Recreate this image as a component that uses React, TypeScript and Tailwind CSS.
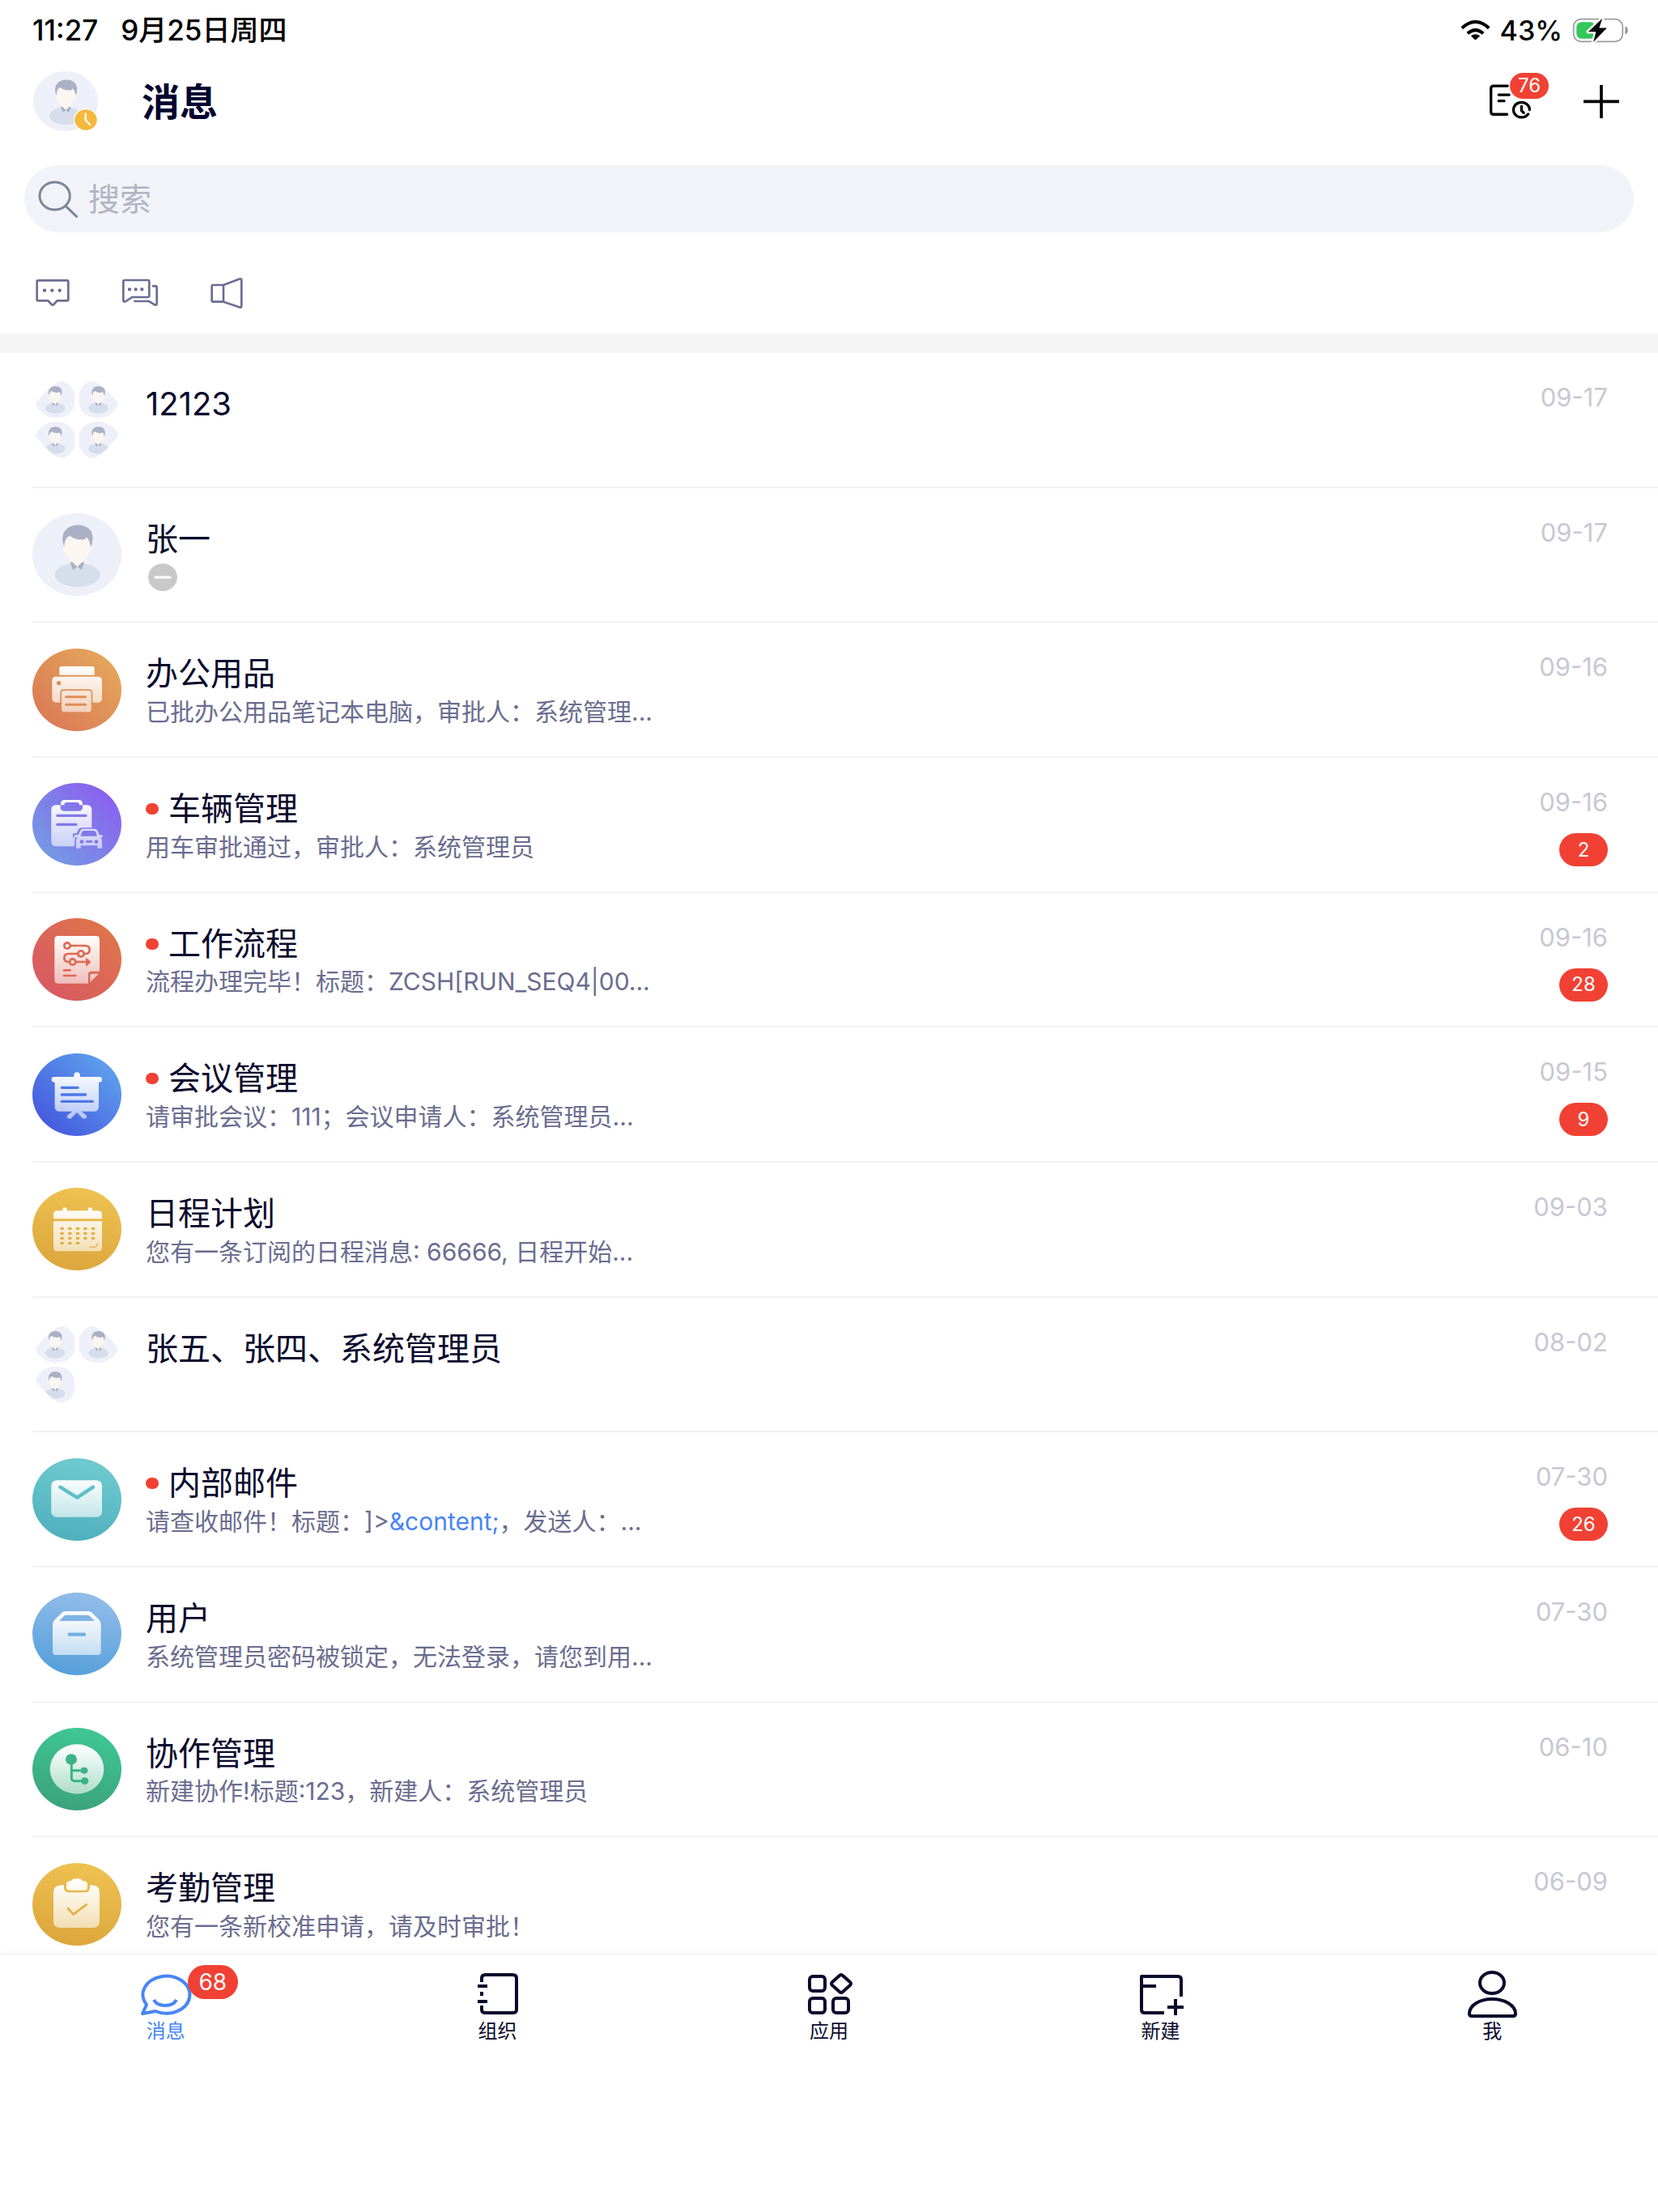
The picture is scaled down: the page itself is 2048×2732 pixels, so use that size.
import { useId } from 'react'
import type { ReactNode } from 'react'

type Message = {
  id: number
  title: string
  preview?: ReactNode
  date: string
  unread?: number
  avatar: ReactNode
}

function Person() {
  return (
    <>
      <ellipse cx="167" cy="228" rx="84" ry="45" fill="#d6deec" />
      <path
        d="M122 88C122 70 213 70 213 88V122C222 124 221 140 211 143C206 160 190 172 184 182L167 200L148 182C142 172 126 160 122 143C112 140 111 124 122 122Z"
        fill="#fcf6f2"
      />
      <path
        d="M118 124C108 100 110 72 124 62C140 38 196 36 214 62C226 74 226 104 217 124C213 116 213 96 199 88C198 94 196 96 192 97C172 99 152 94 140 84C124 86 119 104 118 124Z"
        fill="#abb0c4"
      />
      <path d="M147 180L167 198L151 210L140 183ZM185 180L167 198L182 210L192 184Z" fill="#abb0c4" />
    </>
  )
}

function PersonAvatar({ className }: { className: string }) {
  return (
    <svg viewBox="0 0 330 306" className={className} aria-hidden="true">
      <ellipse cx="165" cy="153" rx="165" ry="153" fill="#edf0f8" />
      <Person />
    </svg>
  )
}

const petals = [
  { x: 12, y: 11, flip: '' },
  { x: 172, y: 11, flip: 'translate(146 0) scale(-1 1)' },
  { x: 12, y: 161, flip: 'translate(0 136) scale(1 -1)' },
  { x: 172, y: 161, flip: 'translate(146 136) scale(-1 -1)' },
]

function GroupAvatar({ count }: { count: number }) {
  const id = useId()
  return (
    <svg viewBox="0 0 330 306" className="h-[102px] w-[110px]" aria-hidden="true">
      {petals.slice(0, count).map((petal, i) => (
        <g key={i} transform={`translate(${petal.x} ${petal.y})`}>
          <clipPath id={`${id}-${i}`}>
            <path
              d="M0 88Q10 64 50 28Q82 0 97 0Q146 12 146 66Q146 136 72 136Q22 132 0 88Z"
              transform={petal.flip || undefined}
            />
          </clipPath>
          <g clipPath={`url(#${id}-${i})`}>
            <rect width="146" height="136" fill="#edf0f8" />
            <g transform="translate(-1 0) scale(0.44)">
              <Person />
            </g>
          </g>
        </g>
      ))}
    </svg>
  )
}

type AppAvatarProps = {
  from: string
  to: string
  diagonal?: boolean
  children: (glyph: string) => ReactNode
}

// Round app icon: coloured gradient disc with a white glyph that fades towards the bottom
function AppAvatar({ from, to, diagonal, children }: AppAvatarProps) {
  const id = useId()
  return (
    <svg viewBox="0 0 330 306" className="h-[102px] w-[110px]" aria-hidden="true">
      <defs>
        <linearGradient id={`${id}-bg`} x1={diagonal ? '0.85' : '0.6'} y1={diagonal ? '0.15' : '0'} x2={diagonal ? '0.15' : '0.4'} y2={diagonal ? '0.85' : '1'}>
          <stop offset="0" stopColor={from} />
          <stop offset="1" stopColor={to} />
        </linearGradient>
        <linearGradient id={`${id}-fg`} gradientUnits="userSpaceOnUse" x1="0" y1="60" x2="0" y2="245">
          <stop offset="0" stopColor="#fff" />
          <stop offset="1" stopColor="#fff" stopOpacity="0.58" />
        </linearGradient>
      </defs>
      <ellipse cx="165" cy="153" rx="165" ry="153" fill={`url(#${id}-bg)`} />
      {children(`url(#${id}-fg)`)}
    </svg>
  )
}

const printerIcon = (
  <AppAvatar from="#e4a45a" to="#db7c56" diagonal>
    {(fg) => (
      <>
        <path d="M107 66H223Q230 66 230 73V98H100V73Q100 66 107 66Z" fill={fg} />
        <path
          d="M89 104H242Q258 104 258 120V184Q258 200 242 200H223V164Q223 151 210 151H116Q103 151 103 164V200H89Q73 200 73 184V120Q73 104 89 104ZM98 120A8 8 0 1 0 98 136A8 8 0 1 0 98 120Z"
          fill={fg}
        />
        <rect x="108" y="156" width="110" height="79" rx="9" fill={fg} />
        <path d="M125 179H197M125 208H197" stroke="#de8f57" strokeWidth="9" strokeLinecap="round" />
      </>
    )}
  </AppAvatar>
)

const vehicleIcon = (
  <AppAvatar from="#8a62ef" to="#7598e4" diagonal>
    {(fg) => (
      <>
        <path
          d="M88 82H104V90Q104 104 118 104H172Q186 104 186 90V82H202Q220 82 220 100V166H184Q172 166 168 178L164 187H150V202H158L155 235H88Q70 235 70 217V100Q70 82 88 82Z"
          fill={fg}
        />
        <path d="M105 82V78Q105 63 120 63H171Q186 63 186 78V82H174Q174 72 164 72H128Q118 72 118 82Z" fill={fg} />
        <path d="M93 121H198M92 154H162" stroke="#8079e8" strokeWidth="10" strokeLinecap="round" />
        <path
          d="M188 170H229Q240 170 244 182L248 193H260V202H252Q258 206 258 214V242H241V232H179V242H162V214Q162 206 168 202H155V193H170L175 182Q179 170 188 170Z"
          fill={fg}
        />
        <path d="M192 177H226Q234 177 236 184L240 197H179L183 184Q185 177 192 177Z" fill="#8079e8" />
        <circle cx="183" cy="218" r="7" fill="#8079e8" />
        <circle cx="237" cy="218" r="7" fill="#8079e8" />
        <path d="M202 217H219" stroke="#8079e8" strokeWidth="8" strokeLinecap="round" />
      </>
    )}
  </AppAvatar>
)

const flowIcon = (
  <AppAvatar from="#df744c" to="#d85a62" diagonal>
    {(fg) => (
      <>
        <path d="M95 66H236Q249 66 249 79V197H218Q207 197 207 208V242H95Q82 242 82 229V79Q82 66 95 66Z" fill={fg} />
        <path d="M220 206H246L214 237V212Q214 206 220 206Z" fill={fg} />
        <g fill="none" stroke="#dc6a52" strokeWidth="8" strokeLinecap="round">
          <circle cx="129" cy="102" r="11" />
          <path d="M141 102H196Q212 102 212 117T196 132H192M169 132H134Q118 132 118 147T134 162H138M161 162H200" />
          <circle cx="180" cy="132" r="11" />
          <circle cx="149" cy="162" r="11" />
          <path d="M117 193H140M117 213H160" />
        </g>
        <path d="M198 147Q206 150 217 162Q206 175 198 179Z" fill="#dc6a52" />
      </>
    )}
  </AppAvatar>
)

const meetingIcon = (
  <AppAvatar from="#5d9ded" to="#465cdf" diagonal>
    {(fg) => (
      <>
        <path
          d="M154 87V81Q154 70 165 70T177 81V87H249Q258 87 258 97T249 107H246V197Q246 215 228 215H182L202 232Q202 244 188 242L165 219L142 242Q128 244 128 232L148 215H101Q83 215 83 197V107H80Q71 107 71 97T80 87Z"
          fill={fg}
        />
        <path d="M109 127H168M109 153H197M109 178H223" stroke="#4f78e6" strokeWidth="10" strokeLinecap="round" />
      </>
    )}
  </AppAvatar>
)

const calendarDots = [
  [110, 139, 168, 196, 225],
  [110, 139, 168, 196, 225],
  [110, 139, 168, 196, 225],
  [110, 139, 168],
]

const calendarIcon = (
  <AppAvatar from="#eec251" to="#dca63c">
    {(fg) => (
      <>
        <path
          d="M92 85H112V80Q112 73 120 73T128 80V85H206V80Q206 73 214 73T222 80V85H244Q258 85 258 99V115H78V99Q78 85 92 85Z"
          fill={fg}
        />
        <path d="M78 124H258V221Q258 235 244 235H92Q78 235 78 221Z" fill={fg} />
        {calendarDots.map((row, r) =>
          row.map((x) => <rect key={`${r}-${x}`} x={x - 7} y={146 + r * 18} width="14" height="10" rx="5" fill="#e0ae42" />),
        )}
        <path d="M211 220H226Q241 220 242 204" fill="none" stroke="#e6bb66" strokeWidth="5" />
      </>
    )}
  </AppAvatar>
)

const mailIcon = (
  <AppAvatar from="#6fcbcf" to="#4fafbd">
    {(fg) => (
      <>
        <rect x="70" y="82" width="188" height="136" rx="20" fill={fg} />
        <path d="M103 107L166 146L225 107" fill="none" stroke="#5ebfc8" strokeWidth="13" strokeLinecap="round" />
      </>
    )}
  </AppAvatar>
)

const boxIcon = (
  <AppAvatar from="#92bde9" to="#559fdb">
    {(fg) => (
      <>
        <path
          d="M75 118Q75 107 84 99L108 76Q114 69 122 69H208Q216 69 222 76L246 99Q254 107 254 118V219Q254 231 242 231H87Q75 231 75 219ZM100 105H230L213 87Q209 83 203 83H127Q121 83 117 87Z"
          fill={fg}
          fillRule="evenodd"
        />
        <path d="M137 155H192" stroke="#73aee3" strokeWidth="13" strokeLinecap="round" />
      </>
    )}
  </AppAvatar>
)

const collabIcon = (
  <AppAvatar from="#3fc795" to="#3ca27c">
    {(fg) => (
      <>
        <ellipse cx="165" cy="153" rx="100" ry="92" fill={fg} />
        <ellipse cx="144" cy="117" rx="21" ry="20" fill="#3eb289" />
        <ellipse cx="192" cy="158" rx="14" ry="12" fill="#3eb289" />
        <ellipse cx="194" cy="197" rx="14" ry="13" fill="#3eb289" />
        <path d="M145 120V186Q145 197 156 197H190M145 158H190" fill="none" stroke="#3eb289" strokeWidth="9" />
      </>
    )}
  </AppAvatar>
)

const attendanceIcon = (
  <AppAvatar from="#eec251" to="#dca63c">
    {(fg) => (
      <>
        <path
          d="M108 82H117V90Q117 109 136 109H194Q213 109 213 90V82H222Q249 84 249 108V216Q249 240 222 240H106Q78 240 78 216V108Q78 84 108 82Z"
          fill={fg}
        />
        <path
          d="M144 66Q148 58 158 58H172Q182 58 186 66Q204 66 204 78V92Q204 101 192 101H138Q126 101 126 92V78Q126 66 144 66Z"
          fill={fg}
        />
        <path d="M132 168L152 190L200 154" fill="none" stroke="#e3b047" strokeWidth="8" strokeLinecap="round" />
      </>
    )}
  </AppAvatar>
)

const messages: Message[] = [
  { id: 1, title: '12123', date: '09-17', avatar: <GroupAvatar count={4} /> },
  {
    id: 2,
    title: '张一',
    date: '09-17',
    avatar: <PersonAvatar className="h-[102px] w-[110px]" />,
    preview: (
      <svg viewBox="0 0 42 34" className="h-[34px] w-[42px]" role="img" aria-label="离线">
        <ellipse cx="21" cy="17" rx="18" ry="17" fill="#c9c9c9" />
        <path d="M12 17H30" stroke="#fff" strokeWidth="3" strokeLinecap="round" />
      </svg>
    ),
  },
  { id: 3, title: '办公用品', date: '09-16', avatar: printerIcon, preview: '已批办公用品笔记本电脑，审批人：系统管理...' },
  { id: 4, title: '车辆管理', date: '09-16', unread: 2, avatar: vehicleIcon, preview: '用车审批通过，审批人：系统管理员' },
  { id: 5, title: '工作流程', date: '09-16', unread: 28, avatar: flowIcon, preview: '流程办理完毕！标题：ZCSH[RUN_SEQ4|00...' },
  { id: 6, title: '会议管理', date: '09-15', unread: 9, avatar: meetingIcon, preview: '请审批会议：111；会议申请人：系统管理员...' },
  { id: 7, title: '日程计划', date: '09-03', avatar: calendarIcon, preview: '您有一条订阅的日程消息: 66666, 日程开始...' },
  { id: 8, title: '张五、张四、系统管理员', date: '08-02', avatar: <GroupAvatar count={3} /> },
  {
    id: 9,
    title: '内部邮件',
    date: '07-30',
    unread: 26,
    avatar: mailIcon,
    preview: (
      <>
        请查收邮件！标题：]&gt;<span className="text-[#4785f7]">&amp;content;</span>，发送人：...
      </>
    ),
  },
  { id: 10, title: '用户', date: '07-30', avatar: boxIcon, preview: '系统管理员密码被锁定，无法登录，请您到用...' },
  { id: 11, title: '协作管理', date: '06-10', avatar: collabIcon, preview: '新建协作!标题:123，新建人：系统管理员' },
  { id: 12, title: '考勤管理', date: '06-09', avatar: attendanceIcon, preview: '您有一条新校准申请，请及时审批！' },
]

function StatusBar() {
  return (
    <div className="flex h-[74px] shrink-0 items-center justify-between pr-9 pl-10 font-medium text-black">
      <div className="flex gap-7 text-[35px]">
        <span>11:27</span>
        <span>9月25日周四</span>
      </div>
      <div className="flex items-center gap-3 text-[34px]">
        <svg viewBox="0 0 110 72" className="h-6 w-[37px]" aria-hidden="true">
          <path d="M5 29Q55 -17 105 29M26 49Q55 24 84 49" fill="none" stroke="#000" strokeWidth="12" />
          <path d="M38 58Q55 45 72 58L58 71Q55 73 52 71Z" />
        </svg>
        <span>43%</span>
        <svg viewBox="0 0 210 94" className="h-[31px] w-[70px]" aria-hidden="true">
          <rect x="4" y="5" width="184" height="84" rx="28" fill="none" stroke="#9b9b9b" strokeWidth="5" />
          <path d="M197 31Q208 36 208 47T197 62Z" fill="#9b9b9b" />
          <rect x="15" y="16" width="70" height="62" rx="19" fill="#34c759" />
          <path d="M112 2L59 52H88L78 91L129 38H100Z" stroke="#fff" strokeWidth="14" strokeLinejoin="round" />
          <path d="M112 2L59 52H88L78 91L129 38H100Z" />
        </svg>
      </div>
    </div>
  )
}

function Header() {
  return (
    <header className="flex h-[102px] shrink-0 items-center justify-between pr-12 pl-[41px]">
      <div className="flex items-center gap-[54px]">
        <button type="button" aria-label="个人资料" className="relative">
          <PersonAvatar className="h-[74px] w-20" />
          <svg viewBox="0 0 90 84" className="absolute right-0 bottom-0 h-7 w-[30px]" aria-hidden="true">
            <ellipse cx="45" cy="42" rx="43" ry="40" fill="#f4b83d" stroke="#fff" strokeWidth="4" />
            <path d="M44 20V43L61 60" fill="none" stroke="#fff" strokeWidth="7" strokeLinecap="round" />
          </svg>
        </button>
        <h1 className="pt-0.5 text-[47px] leading-[56px] font-bold text-[#04042f]">消息</h1>
      </div>
      <div className="flex items-center gap-16">
        <button type="button" aria-label="待办" className="relative">
          <svg viewBox="0 0 160 138" className="h-[46px] w-[53px]" fill="none" stroke="#000" strokeWidth="10" strokeLinecap="round" aria-hidden="true">
            <path d="M70 12H18Q8 12 8 22V108Q8 118 18 118H68M37 45H76M37 68H57" />
            <path d="M146 118A30 28 0 1 1 152 101M147 117L141 123M122 88V104L130 112" />
          </svg>
          <span className="absolute -top-3 left-[26px] flex h-8 w-12 items-center justify-center rounded-full bg-[#f14134] text-2xl text-white">
            76
          </span>
        </button>
        <button type="button" aria-label="添加">
          <svg viewBox="0 0 132 123" className="h-[41px] w-11" stroke="#000" strokeWidth="11" aria-hidden="true">
            <path d="M0 61H132M66 0V123" />
          </svg>
        </button>
      </div>
    </header>
  )
}

function SearchBox() {
  return (
    <label className="mx-[30px] mt-7 flex h-[83px] shrink-0 items-center gap-3 rounded-full bg-[#f2f3f9] pl-[17px]">
      <svg viewBox="0 0 150 138" className="h-[46px] w-[50px]" fill="none" stroke="#7f8699" strokeWidth="9" strokeLinecap="round" aria-hidden="true">
        <ellipse cx="62" cy="57" rx="56" ry="51" />
        <path d="M105 97L143 133" />
      </svg>
      <input type="search" aria-label="搜索" placeholder="搜索" className="h-full flex-1 bg-transparent text-[39px] outline-none placeholder:text-[#b1b4c1]" />
    </label>
  )
}

function Filters() {
  return (
    <div className="flex h-[125px] shrink-0 items-center pt-6 pl-11 text-[#6b6d93]">
      <button type="button" aria-label="单聊" className="mr-16">
        <svg viewBox="0 0 126 105" className="h-[35px] w-[42px]" fill="none" stroke="currentColor" strokeWidth="8" aria-hidden="true">
          <path d="M9 7H117Q121 7 121 11V78Q121 82 117 82H80L67 96Q63 100 59 96L46 82H9Q5 82 5 78V11Q5 7 9 7Z" />
          <path d="M33 44H33.1M61 44H61.1M89 44H89.1" strokeWidth="13" strokeLinecap="round" />
        </svg>
      </button>
      <button type="button" aria-label="群聊" className="mr-16">
        <svg viewBox="0 0 138 105" className="h-[35px] w-[46px]" fill="none" stroke="currentColor" strokeWidth="8" aria-hidden="true">
          <path d="M7 80V11Q7 6 12 6H98Q103 6 103 11V64Q103 69 98 69H40L15 85Q7 88 7 80Z" />
          <path d="M117 28H127Q131 28 131 32V93Q130 101 123 97L102 84H49" strokeLinecap="round" />
          <path d="M30 40H30.1M53 40H53.1M76 40H76.1" strokeWidth="13" strokeLinecap="round" />
        </svg>
      </button>
      <button type="button" aria-label="公告">
        <svg viewBox="0 0 120 120" className="size-10" fill="none" stroke="currentColor" strokeWidth="8" aria-hidden="true">
          <path d="M48 30L106 8Q115 5 115 12V108Q115 115 106 112L48 92M9 30H48V92H9Q5 92 5 88V34Q5 30 9 30Z" />
        </svg>
      </button>
    </div>
  )
}

function MessageRow({ message }: { message: Message }) {
  const { title, preview, date, unread, avatar } = message
  return (
    <li className="ml-10 flex items-center border-b-2 border-[#f2f2f3]">
      <div className="shrink-0">{avatar}</div>
      <div className="ml-[30px] flex min-w-0 flex-1 flex-col self-start pt-10">
        <h2 className="flex h-[46px] items-center gap-3 text-[40px] text-[#0a0a2c]">
          {unread && <span className="h-3.5 w-4 rounded-full bg-[#f14134]" />}
          {title}
        </h2>
        <div className="flex h-12 items-center text-[30px] whitespace-pre text-[#6b6d8f] [text-spacing-trim:space-all]">
          <p>{preview}</p>
        </div>
      </div>
      <div className="flex shrink-0 flex-col items-end self-start pt-10 pr-[62px]">
        <time className="h-[53px] text-[31px] leading-[30px] text-[#c8c8d3]">{date}</time>
        {unread && (
          <span className="flex h-[41px] w-[60px] items-center justify-center rounded-full bg-[#f14134] text-2xl text-white">
            {unread}
          </span>
        )}
      </div>
    </li>
  )
}

const tabs = [
  {
    label: '消息',
    badge: 68,
    icon: (
      <>
        <path d="M7 54L12 43A29 23 0 1 1 23 51Z" />
        <path d="M21 37Q25 44 35 44T49 37" />
      </>
    ),
  },
  {
    label: '组织',
    icon: <path d="M17 15V10Q17 6 22 6H55Q60 6 60 10V49Q60 53 55 53H22Q17 53 17 49V44M12 20H24M17 27V32M12 39H24" />,
  },
  {
    label: '应用',
    icon: (
      <>
        <rect x="12" y="8" width="19" height="18" rx="4" />
        <rect x="12" y="35" width="19" height="18" rx="4" />
        <rect x="41" y="35" width="19" height="18" rx="4" />
        <path d="M49 7Q51 5 53 7L62 15Q64 17 62 19L53 27Q51 29 49 27L40 19Q38 17 40 15Z" />
      </>
    ),
  },
  {
    label: '新建',
    icon: <path d="M61 33V12Q61 8 57 8H12V49Q12 53 16 53H40M12 20H30M54 36V56M44 46H64" />,
  },
  {
    label: '我',
    icon: (
      <>
        <ellipse cx="36" cy="16" rx="15" ry="13" />
        <path d="M8 54C8 44 20 36 36 36S65 44 65 54Q65 57 62 57H11Q8 57 8 54Z" />
      </>
    ),
  },
]

function TabBar() {
  return (
    <nav className="relative grid h-[317px] shrink-0 grid-cols-5 items-start bg-white pt-[18px] shadow-[0_-3px_6px_rgba(30,30,80,0.05)]">
      {tabs.map((tab, i) => (
        <button
          key={tab.label}
          type="button"
          aria-current={i === 0 ? 'page' : undefined}
          className={`flex flex-col items-center ${i === 0 ? 'text-[#4785f7]' : 'text-[#0a0a2c]'}`}
        >
          <span className="relative">
            <svg viewBox="0 0 72 60" className="h-[60px] w-[72px]" fill="none" stroke="currentColor" strokeWidth="4" strokeLinejoin="round" aria-hidden="true">
              {tab.icon}
            </svg>
            {tab.badge && (
              <span className="absolute -top-1.5 left-[63px] flex h-[42px] w-[62px] items-center justify-center rounded-full bg-[#f14134] text-[28px] text-white">
                {tab.badge}
              </span>
            )}
          </span>
          <span className="text-2xl">{tab.label}</span>
        </button>
      ))}
    </nav>
  )
}

export default function App() {
  return (
    <div className="flex h-screen flex-col bg-white font-['Inter','Noto_Sans_CJK_SC',sans-serif]">
      <StatusBar />
      <Header />
      <SearchBox />
      <Filters />
      <main className="min-h-0 flex-1 overflow-y-auto border-t-[24px] border-[#f5f5f5] [scrollbar-width:none]">
        <ul className="grid h-[2000px] auto-rows-fr">
          {messages.map((message) => (
            <MessageRow key={message.id} message={message} />
          ))}
        </ul>
      </main>
      <TabBar />
    </div>
  )
}
